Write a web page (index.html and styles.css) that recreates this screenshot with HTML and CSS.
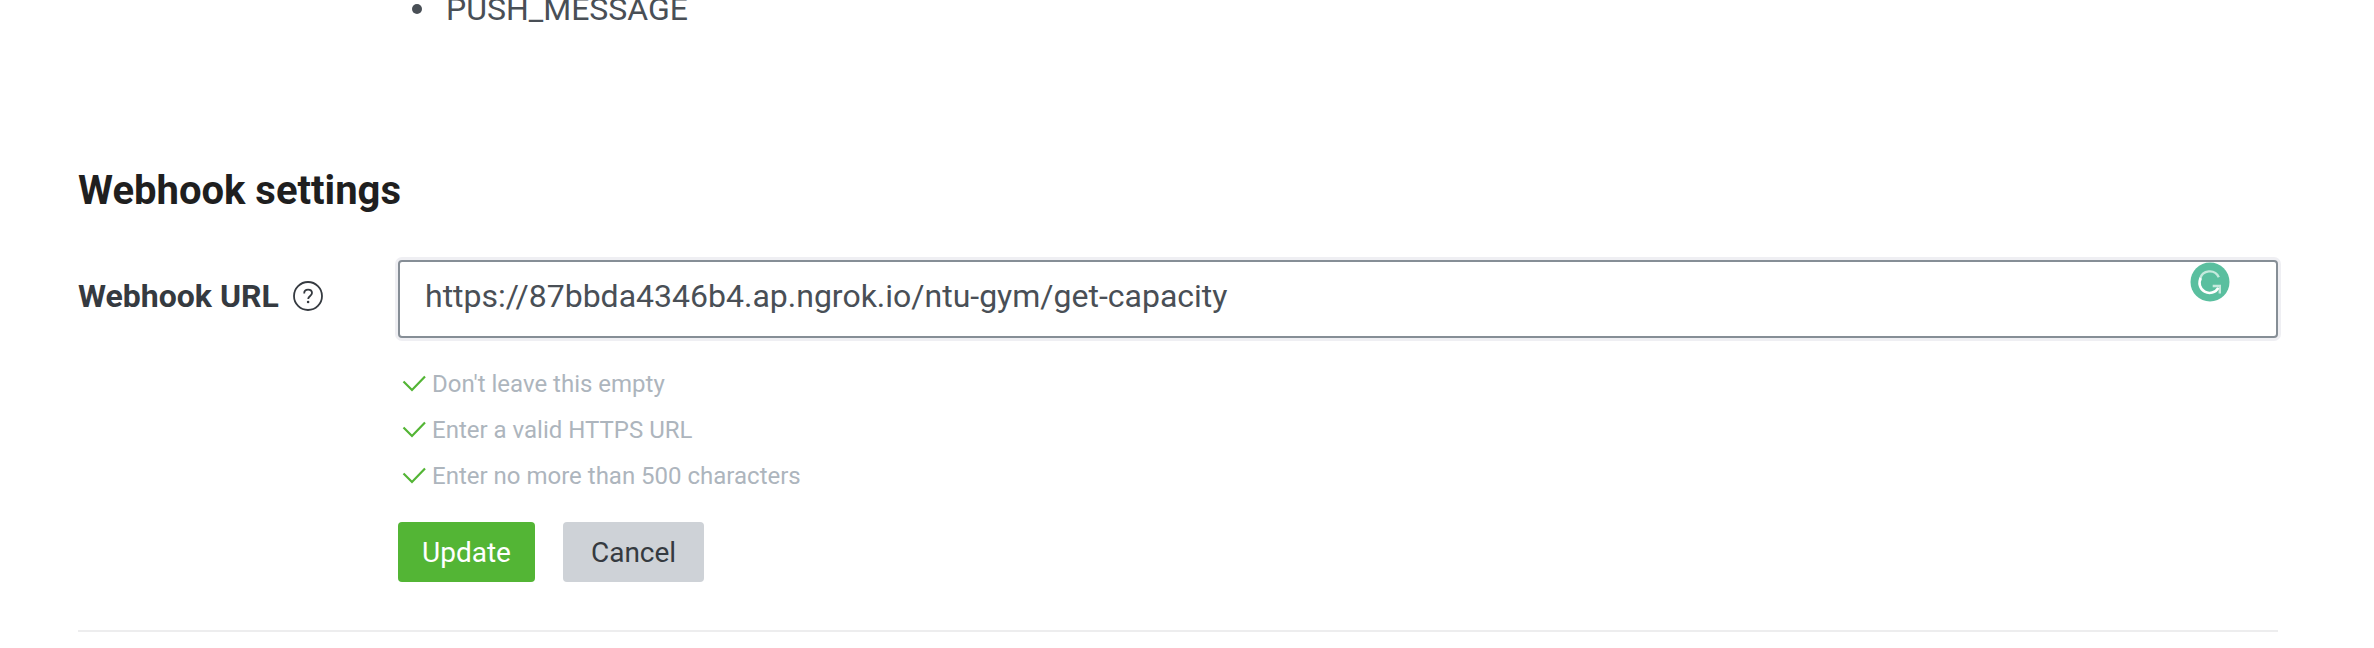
FILE: index.html
```html
<!DOCTYPE html>
<html lang="en">
<head>
<meta charset="utf-8">
<title>Webhook settings</title>
<link rel="stylesheet" href="styles.css">
</head>
<body>
<main class="page">
  <ul class="permissions">
    <li>PUSH_MESSAGE</li>
  </ul>
  <section class="settings">
    <h2 class="settings-title">Webhook settings</h2>
    <form class="field">
      <div class="field-name">
        <label for="webhook-url">Webhook URL</label>
        <button class="help" type="button" aria-label="Help">
          <svg viewBox="0 0 32 32" fill="none" stroke="currentColor">
            <circle cx="16" cy="16" r="14" stroke-width="1.8"/>
            <path d="M12.2 13.4c0-2.3 1.6-3.7 3.9-3.7s3.9 1.3 3.9 3.4c0 2.8-3.8 3-3.8 5.9" stroke-width="1.8"/>
            <circle cx="16.1" cy="22" r="1.3" fill="currentColor" stroke="none"/>
          </svg>
        </button>
      </div>
      <div class="field-body">
        <div class="url-box">
          <input class="url-input" id="webhook-url" type="text" value="https://87bbda4346b4.ap.ngrok.io/ntu-gym/get-capacity" spellcheck="false">
          <svg class="grammar-badge" viewBox="0 0 40 40" fill="none">
            <circle cx="20" cy="20" r="19.5" fill="#5abf9f"/>
            <path d="M10 17A10 10 0 0 1 28.800 15.200" stroke="#c5e9dd" stroke-width="2.400"/>
            <path d="M22.700 24H29.800V31.500" stroke="#c5e9dd" stroke-width="2.400"/>
            <path d="M10.800 16A10 10 0 0 0 28.300 25.800" stroke="#fff" stroke-width="2.600"/>
          </svg>
        </div>
        <ul class="checks">
          <li><svg class="tick" viewBox="0 0 24 18"><path d="M1.500 6.500 10 15 23 1.500"/></svg>Don't leave this empty</li>
          <li><svg class="tick" viewBox="0 0 24 18"><path d="M1.500 6.500 10 15 23 1.500"/></svg>Enter a valid HTTPS URL</li>
          <li><svg class="tick" viewBox="0 0 24 18"><path d="M1.500 6.500 10 15 23 1.500"/></svg>Enter no more than 500 characters</li>
        </ul>
        <div class="actions">
          <button class="btn btn-primary" type="submit">Update</button>
          <button class="btn btn-secondary" type="button">Cancel</button>
        </div>
      </div>
    </form>
  </section>
</main>
</body>
</html>
```
FILE: styles.css
```css
* {
  box-sizing: border-box;
}

body {
  margin: 0;
  background: #fff;
  color: #494f56;
  font: 32px/48px Roboto, sans-serif;
  overflow: hidden;
}

.page {
  padding: 0 96px 0 78px;
}

.permissions {
  margin: -15px 0 0 320px;
  padding: 0;
  list-style: none;
}

.permissions li {
  display: flex;
  align-items: center;
  gap: 24px;
  padding-left: 14px;
}

.permissions li::before {
  content: "";
  width: 10px;
  height: 10px;
  border-radius: 50%;
  background: #494f56;
}

.settings {
  margin-top: 134px;
  padding-bottom: 48px;
  border-bottom: 2px solid #ededee;
}

.settings-title {
  margin: 0 0 45px;
  color: #1f1f1f;
  font-size: 40px;
  font-weight: 700;
}

.field {
  display: grid;
  grid-template-columns: 320px 1fr;
}

.field-name {
  display: flex;
  align-items: center;
  gap: 13px;
  height: 72px;
  color: #353a40;
  font-weight: 700;
}

.help {
  width: 32px;
  height: 32px;
  padding: 0;
  border: 0;
  background: none;
  color: inherit;
}

.help svg {
  display: block;
}

.url-box {
  position: relative;
}

.url-input {
  display: block;
  width: 100%;
  height: 78px;
  padding: 0 96px 6px 25px;
  border: 2px solid #868e96;
  border-radius: 4px;
  outline: 0;
  box-shadow: 0 0 0 3px #efeff3;
  background: #fff;
  color: #494f56;
  font: inherit;
}

.grammar-badge {
  position: absolute;
  top: 2px;
  right: 48px;
  width: 40px;
  height: 40px;
}

.checks {
  margin: 23px 0;
  padding: 0;
  list-style: none;
  color: #adb5bd;
  font-size: 24px;
  line-height: 46px;
}

.checks li {
  display: flex;
  align-items: center;
  gap: 6px;
  padding-left: 4px;
}

.tick {
  width: 24px;
  height: 18px;
  fill: none;
  stroke: #53b535;
  stroke-width: 2.2;
}

.actions {
  display: flex;
  gap: 28px;
}

.btn {
  height: 60px;
  padding: 2px 24px 0;
  border: 0;
  border-radius: 4px;
  font: 28px/58px Roboto, sans-serif;
}

.btn-primary {
  background: #53b535;
  color: #fff;
}

.btn-secondary {
  padding-inline: 28px;
  background: #ced2d7;
  color: #353a40;
}
```
